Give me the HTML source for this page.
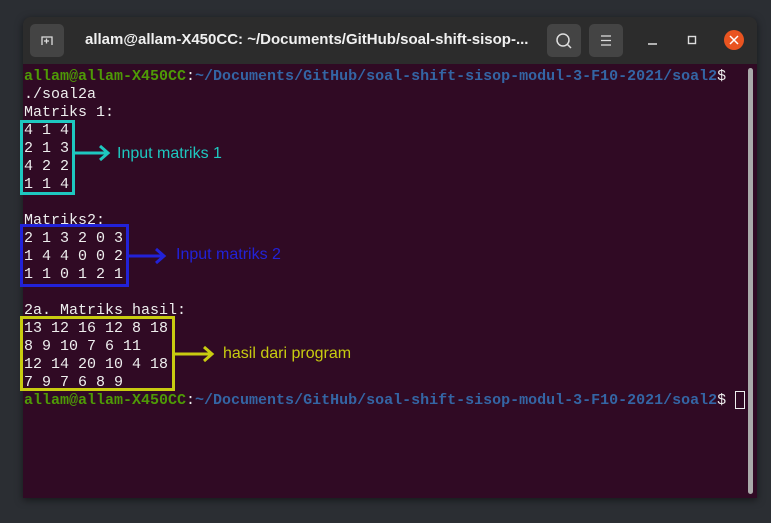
<!DOCTYPE html>
<html><head><style>
body{margin:0;width:771px;height:523px;background:#2b2e33;position:relative;overflow:hidden;font-family:"Liberation Sans",sans-serif}
.win{position:absolute;left:23px;top:17px;width:734px;height:481px;background:#2c2c2c;border-radius:8px 8px 0 0;overflow:hidden;box-shadow:0 2px 8px rgba(0,0,0,.5)}
.tb{position:absolute;left:0;top:0;width:734px;height:47px;background:#2c2c2c}
.body{position:absolute;left:0;top:47px;width:734px;height:434px;background:#300a24}
.btn{position:absolute;top:7px;width:34px;height:33px;background:#444;border-radius:5px}
.title{position:absolute;left:62px;top:14px;color:#f0f0f0;font-weight:bold;font-size:15px}
pre{position:absolute;left:1px;top:4px;margin:0;font-family:"Liberation Mono",monospace;font-size:15px;line-height:18px;color:#eee;white-space:pre;width:760px}
.g{color:#4e9a06;font-weight:bold}.b{color:#3465a4;font-weight:bold}
.box{position:absolute;border:3px solid}
.lab{position:absolute;font-size:16px}
</style></head><body>
<div class="win">
<div class="tb">
<div class="btn" style="left:7px"><svg width="34" height="33"><path d="M12 21V13h10v8M14 17h5M16.5 14.5v5" stroke="#ddd" stroke-width="1.3" fill="none"/></svg></div>
<div class="title">allam@allam-X450CC: ~/Documents/GitHub/soal-shift-sisop-...</div>
<div class="btn" style="left:524px"><svg width="34" height="33"><circle cx="16" cy="16" r="6" stroke="#ddd" stroke-width="1.5" fill="none"/><path d="M20.5 20.5L24 24" stroke="#ddd" stroke-width="1.5"/></svg></div>
<div class="btn" style="left:566px"><svg width="34" height="33"><path d="M12 12h10M12 16.5h10M12 21h10" stroke="#ddd" stroke-width="1.3"/></svg></div>
<svg style="position:absolute;left:620px;top:10px" width="110" height="30"><path d="M5 17h9" stroke="#ddd" stroke-width="1.5"/><rect x="45.5" y="9.5" width="7" height="7" stroke="#ddd" stroke-width="1.4" fill="none"/><circle cx="91" cy="13" r="10" fill="#e95420"/><path d="M87 9l8 8M95 9l-8 8" stroke="#fff" stroke-width="1.5"/></svg>
</div>
<div class="body">
<pre><span class="g">allam@allam-X450CC</span>:<span class="b">~/Documents/GitHub/soal-shift-sisop-modul-3-F10-2021/soal2</span>$
./soal2a
Matriks 1:
4 1 4
2 1 3
4 2 2
1 1 4

Matriks2:
2 1 3 2 0 3
1 4 4 0 0 2
1 1 0 1 2 1

2a. Matriks hasil:
13 12 16 12 8 18
8 9 10 7 6 11
12 14 20 10 4 18
7 9 7 6 8 9
<span class="g">allam@allam-X450CC</span>:<span class="b">~/Documents/GitHub/soal-shift-sisop-modul-3-F10-2021/soal2</span>$</pre>
<div style="position:absolute;left:712px;top:327px;width:10px;height:18px;border:1px solid #eee;box-sizing:border-box"></div>
<div style="position:absolute;left:725px;top:4px;width:5px;height:426px;background:#aaa;border-radius:3px"></div>
</div>
</div>
<div class="box" style="left:20px;top:120px;width:49px;height:69px;border-color:#1ec8c0"></div>
<svg style="position:absolute;left:74px;top:143px" width="40" height="20"><path d="M0 10h34M26 3l8 7-8 7" stroke="#1ec8c0" stroke-width="3" fill="none"/></svg>
<div class="lab" style="left:117px;top:145px;color:#1ec8c0">Input matriks 1</div>
<div class="box" style="left:20px;top:224px;width:103px;height:57px;border-color:#2222d8"></div>
<svg style="position:absolute;left:128px;top:246px" width="40" height="20"><path d="M0 10h36M28 3l8 7-8 7" stroke="#2222d8" stroke-width="3" fill="none"/></svg>
<div class="lab" style="left:176px;top:246px;color:#2222d8">Input matriks 2</div>
<div class="box" style="left:20px;top:316px;width:149px;height:69px;border-color:#c8cc10"></div>
<svg style="position:absolute;left:174px;top:344px" width="42" height="20"><path d="M0 10h38M30 3l8 7-8 7" stroke="#c8cc10" stroke-width="3" fill="none"/></svg>
<div class="lab" style="left:223px;top:345px;color:#c8cc10">hasil dari program</div>
</body></html>
